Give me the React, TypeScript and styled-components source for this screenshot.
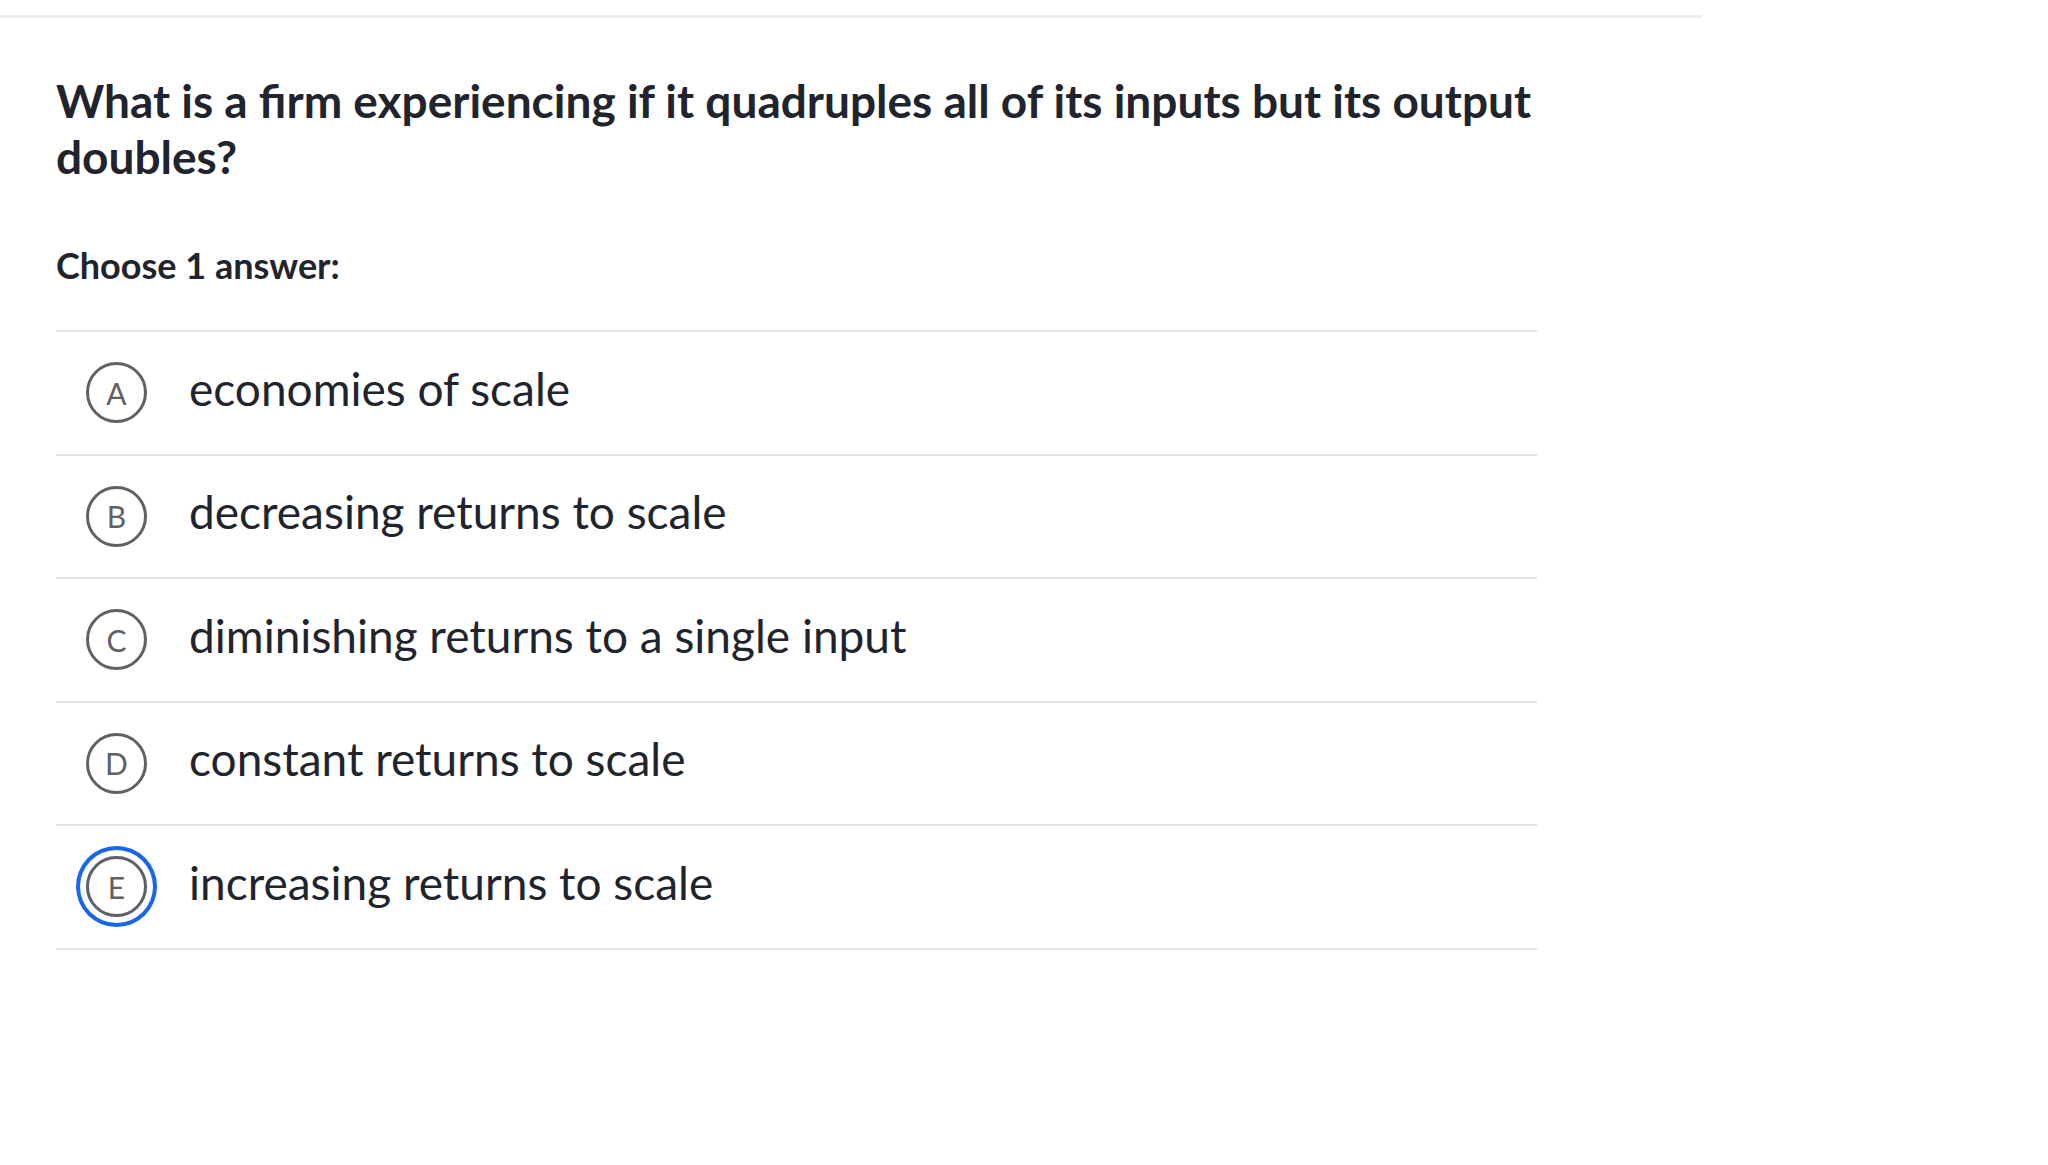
import React from "react";
import styled, { createGlobalStyle } from "styled-components";

const Global = createGlobalStyle`
  html, body { margin: 0; padding: 0; background: #ffffff; }
  body { font-family: Lato, "Noto Sans", sans-serif; color: #21242c; }
`;

const Page = styled.div`
  width: 2048px;
  min-height: 1165px;
  background: #ffffff;
`;

const TopRule = styled.div`
  margin-top: 15px;
  width: 1702px;
  height: 3px;
  background: #eeeeee;
`;

const Content = styled.main`
  width: 1481px;
  padding: 55px 0 0 56px;
`;

const Question = styled.h1`
  margin: 0;
  font-family: Lato, sans-serif;
  font-weight: 700;
  font-size: 46px;
  line-height: 56px;
  color: #21242c;
`;

const Prompt = styled.div`
  margin-top: 60px;
  font-family: Lato, sans-serif;
  font-weight: 700;
  font-size: 36px;
  line-height: 40px;
  color: #21242c;
`;

const Choices = styled.ul`
  list-style: none;
  margin: 45px 0 0;
  padding: 0;
  border-top: 2px solid #e2e2e2;
`;

const Choice = styled.li`
  display: flex;
  align-items: center;
  height: 121.5px;
  padding-left: 30px;
  gap: 42px;
  border-bottom: 2px solid #e2e2e2;
`;

const Bubble = styled.span<{ $selected?: boolean }>`
  flex: none;
  box-sizing: border-box;
  width: 61px;
  height: 61px;
  border-radius: 50%;
  border: 3px solid #5f6165;
  display: flex;
  align-items: center;
  justify-content: center;
  font-family: Lato, sans-serif;
  font-size: 30px;
  line-height: 1;
  color: #5f6165;
  box-shadow: ${(p) =>
    p.$selected ? "0 0 0 6px #ffffff, 0 0 0 10px #1865f2" : "none"};
`;

const Label = styled.span`
  margin-bottom: 8px;
  font-family: Lato, sans-serif;
  font-weight: 400;
  font-size: 46px;
  line-height: 54px;
  color: #21242c;
`;

const options = [
  { key: "A", text: "economies of scale" },
  { key: "B", text: "decreasing returns to scale" },
  { key: "C", text: "diminishing returns to a single input" },
  { key: "D", text: "constant returns to scale" },
  { key: "E", text: "increasing returns to scale", selected: true },
];

export default function App() {
  return (
    <Page>
      <Global />
      <TopRule />
      <Content>
        <Question>
          What is a firm experiencing if it quadruples all of its inputs but its output doubles?
        </Question>
        <Prompt>Choose 1 answer:</Prompt>
        <Choices>
          {options.map((o) => (
            <Choice key={o.key}>
              <Bubble $selected={o.selected}>{o.key}</Bubble>
              <Label>{o.text}</Label>
            </Choice>
          ))}
        </Choices>
      </Content>
    </Page>
  );
}
